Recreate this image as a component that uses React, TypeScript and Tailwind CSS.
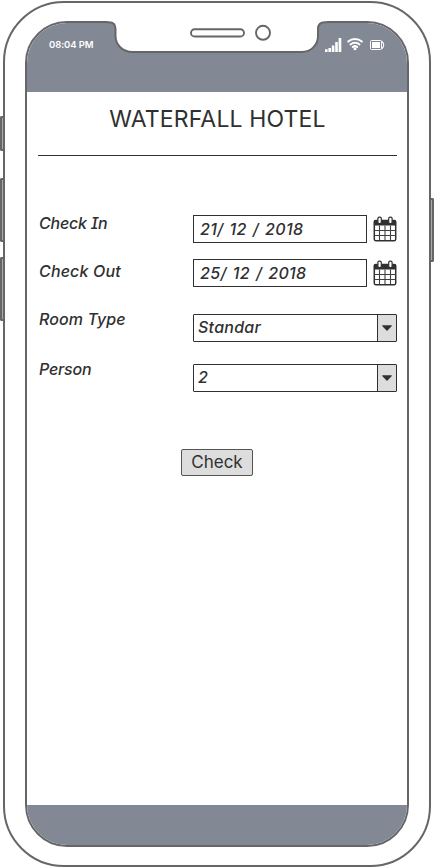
import React from "react";

const INK = "text-[#303030]";

function CalendarIcon() {
  return (
    <svg width="24" height="26" viewBox="0 0 24 26" className="block shrink-0" aria-label="Pick a date">
      <rect x="1.3" y="4.500" width="21.4" height="20.200" rx="1.4" fill="#fff" stroke="#303030" strokeWidth="1.500" />
      <path d="M.9 9.500V5.600C.9 4.500 1.500 4 2.600 4h18.800c1.100 0 1.700.5 1.700 1.600v3.900z" fill="#303030" />
      <path d="M6.500 9.500v15M12 9.500v15M17.500 9.500v15M1.500 14.500h21M1.500 19.500h21" stroke="#404040" strokeWidth="1.100" />
      <rect x="4.900" y="1.200" width="3.400" height="6.500" rx="1.400" fill="#fff" stroke="#303030" strokeWidth="1.200" />
      <rect x="15.700" y="1.200" width="3.400" height="6.500" rx="1.400" fill="#fff" stroke="#303030" strokeWidth="1.200" />
    </svg>
  );
}

function StatusIcons() {
  return (
    <svg width="62" height="16" viewBox="0 0 62 16" className="block" fill="#fff">
      <path d="M0 12.200h2.600V15H0zM3.400 11h2.600v4H3.400zM6.800 8.500h2.600V15H6.800zM10.200 5h2.600v10h-2.600zM13.600 1h2.700v14h-2.700z" />
      <path d="M23.200 5.600a10.500 10.500 0 0 1 13.600 0M25.500 8.400a6.700 6.700 0 0 1 9 0M27.800 11a3.500 3.500 0 0 1 4.400 0" transform="translate(0 -1)" fill="none" stroke="#fff" strokeWidth="2" strokeLinecap="round" />
      <circle cx="30" cy="11.800" r="1.500" />
      <rect x="45.500" y="3.500" width="11" height="9" rx="1" fill="none" stroke="#fff" strokeWidth="1" />
      <path d="M47 5h8v6h-8zM56.500 3.800c1.600.3 2.700 2 2.700 4.200s-1.100 3.900-2.700 4.200v-1.200c.9-.3 1.600-1.500 1.600-3s-.7-2.700-1.600-3z" />
    </svg>
  );
}

function Notch() {
  return (
    <svg width="220" height="36" viewBox="107 20 220 36" className="absolute left-[107px] top-[20px]">
      <path d="M107 19v3.200h2c4.500 0 6.500 2.500 6.500 6.500v7c0 9 7 16.300 17 16.300h169c9.500 0 16.500-7 16.500-16v-7c0-4.300 2.200-6.800 6.800-6.800h2.200V19z" fill="#fff" />
      <path d="M107 22.200h2c4.500 0 6.500 2.500 6.500 6.500v7c0 9 7 16.300 17 16.300h169c9.500 0 16.500-7 16.500-16v-7c0-4.300 2.200-6.800 6.800-6.800h2.200" fill="none" stroke="#666" strokeWidth="2" />
      <rect x="191" y="29.300" width="53" height="7.200" rx="3.600" fill="#fff" stroke="#666" strokeWidth="1.900" />
      <circle cx="263" cy="32.800" r="7" fill="#fff" stroke="#666" strokeWidth="1.900" />
    </svg>
  );
}

function Label({ className, children }: { className: string; children: React.ReactNode }) {
  return <div className={`w-[155px] shrink-0 whitespace-nowrap pl-px leading-5 ${className}`}>{children}</div>;
}

function DateField({ children }: { children: React.ReactNode }) {
  return (
    <div className="flex flex-1 items-center justify-between">
      <div className="flex h-7 w-[174px] items-center whitespace-pre border border-[#303030] bg-white pl-[6px] tracking-[0.35px] [word-spacing:1.4px]">
        {children}
      </div>
      <CalendarIcon />
    </div>
  );
}

function SelectField({ children }: { children: React.ReactNode }) {
  return (
    <div className="flex h-7 flex-1 overflow-hidden rounded-[1px] border border-[#303030] bg-white">
      <div className="flex flex-1 items-center pb-[2px] pl-1 tracking-[0.25px]">{children}</div>
      <div className="flex w-[19px] items-center justify-center border-l border-[#303030] bg-[#ddd]">
        <svg width="10" height="6" viewBox="0 0 10 6">
          <path d="M.8.3h8.400c.6 0 .8.500.4.900L5.500 5.500c-.3.300-.7.300-1 0L.4 1.200C0 .8.200.3.8.3z" fill="#303030" />
        </svg>
      </div>
    </div>
  );
}

export default function App() {
  return (
    <div className={`relative h-[867px] w-[434px] overflow-hidden bg-white font-['Inter','Liberation_Sans',sans-serif] [font-feature-settings:'cv08','cv11'] ${INK}`}>
      <div className="absolute left-0 top-[116px] h-[35px] w-[5px] rounded-l-[2px] border-2 border-r-0 border-[#666] bg-[#aaa]" />
      <div className="absolute left-0 top-[178px] h-[64px] w-[5px] rounded-l-[2px] border-2 border-r-0 border-[#666] bg-[#aaa]" />
      <div className="absolute left-0 top-[257px] h-[64px] w-[5px] rounded-l-[2px] border-2 border-r-0 border-[#666] bg-[#aaa]" />
      <div className="absolute left-[429px] top-[198px] h-[64px] w-[5px] rounded-r-[2px] border-2 border-l-0 border-[#666] bg-[#aaa]" />

      <div className="relative top-px ml-[3px] h-[866px] w-[428px] rounded-[61px] border-2 border-[#666] bg-white pl-[20px] pt-[18px]">
        <div className="flex h-[826px] w-[384px] flex-col overflow-hidden rounded-[42px] border-2 border-[#666] bg-white">
          <header className="flex h-[69px] shrink-0 justify-between bg-[#838895] pl-[22px] pr-[20px] pt-[14px]">
            <span className="pt-px text-[9.5px] font-semibold leading-[14px] tracking-[-0.1px] text-white">08:04 PM</span>
            <StatusIcons />
          </header>

          <main className="flex flex-1 flex-col pl-[11px] pr-[10px]">
            <h1 className="flex h-[64px] items-start justify-center border-b border-[#303030] pt-[12px] text-[23px] leading-[30px] tracking-[0.15px]">
              WATERFALL HOTEL
            </h1>
            <div className="mt-[59px] flex h-[28px] text-[16px] font-medium italic">
              <Label className="-mt-[2px] tracking-[-0.2px]">Check In</Label>
              <DateField>21/ 12 / 2018</DateField>
            </div>
            <div className="mt-[16px] flex h-[28px] text-[16px] font-medium italic">
              <Label className="mt-[2px] tracking-[0.15px]">Check Out</Label>
              <DateField>25/ 12 / 2018</DateField>
            </div>
            <div className="mt-[27px] flex h-[28px] text-[16px] font-medium italic">
              <Label className="-mt-[5px] tracking-[0.1px]">Room Type</Label>
              <SelectField>Standar</SelectField>
            </div>
            <div className="mt-[22px] flex h-[28px] text-[16px] font-medium italic">
              <Label className="-mt-[5px] tracking-[-0.2px]">Person</Label>
              <SelectField>2</SelectField>
            </div>
            <button className="ml-[143px] mt-[57px] flex h-[27px] w-[72px] items-center justify-center rounded-[2px] border border-[#555] bg-[#ddd] text-[17px]">
              Check
            </button>
          </main>

          <footer className="h-[40px] shrink-0 bg-[#838895]" />
        </div>
      </div>
      <Notch />
    </div>
  );
}
